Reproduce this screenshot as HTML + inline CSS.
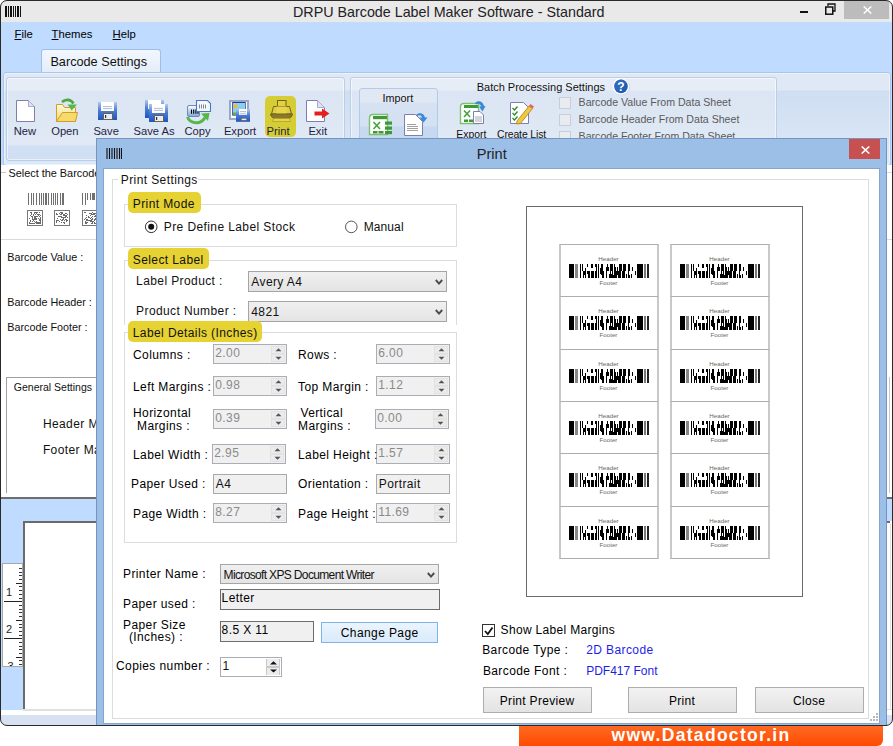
<!DOCTYPE html>
<html><head><meta charset="utf-8"><style>
html,body{margin:0;padding:0;}
body{width:893px;height:746px;position:relative;overflow:hidden;background:#fff;font-family:"Liberation Sans",sans-serif;}
.r{position:absolute;}
.t{position:absolute;white-space:nowrap;}
#main{position:absolute;left:0;top:0;width:893px;height:726px;overflow:hidden;border-radius:7px 7px 7px 7px;}
#frame{position:absolute;left:0;top:0;width:893px;height:726px;border:1px solid #2a2a2a;box-sizing:border-box;border-radius:7px;pointer-events:none;}
</style></head><body>
<div id="main">
<div class="r" style="left:0px;top:0px;width:893px;height:22px;background:#e9e9e9;"></div>
<div class="r" style="left:5px;top:6px;width:2px;height:11px;background:#111;"></div>
<div class="r" style="left:8px;top:6px;width:1px;height:11px;background:#111;"></div>
<div class="r" style="left:10px;top:6px;width:2px;height:11px;background:#111;"></div>
<div class="r" style="left:13px;top:6px;width:1px;height:11px;background:#111;"></div>
<div class="r" style="left:15px;top:6px;width:1px;height:11px;background:#111;"></div>
<div class="r" style="left:17px;top:6px;width:2px;height:11px;background:#111;"></div>
<div class="r" style="left:20px;top:6px;width:1px;height:11px;background:#111;"></div>
<div class="t " style="left:293px;top:5.20px;font-size:14.3px;line-height:14.3px;letter-spacing:0px;color:#222;">DRPU Barcode Label Maker Software - Standard</div>
<div class="r" style="left:800px;top:11px;width:8px;height:2px;background:#111;"></div>
<svg class="r" style="left:825px;top:3px" width="11" height="12"><path d="M3 3V1H10V8H8" fill="none" stroke="#111" stroke-width="1.3"/><rect x="0.75" y="4" width="7" height="7.2" fill="none" stroke="#111" stroke-width="1.5"/></svg>
<div class="r" style="left:844px;top:1px;width:45px;height:18px;background:#bcbcbc;"></div>
<svg class="r" style="left:862.5px;top:5.5px" width="9" height="8"><path d="M0.7 0.5L8.3 7.5M8.3 0.5L0.7 7.5" stroke="#fff" stroke-width="1.5"/></svg>
<div class="r" style="left:0px;top:22px;width:893px;height:143px;background:#bfdbff;"></div>
<div class="t " style="left:14.5px;top:28.73px;font-size:11.3px;line-height:11.3px;letter-spacing:0px;color:#000;"><u>F</u>ile</div>
<div class="t " style="left:51.6px;top:28.73px;font-size:11.3px;line-height:11.3px;letter-spacing:0px;color:#000;"><u>T</u>hemes</div>
<div class="t " style="left:112.6px;top:28.73px;font-size:11.3px;line-height:11.3px;letter-spacing:0px;color:#000;"><u>H</u>elp</div>
<div class="r" style="left:41px;top:49px;width:118px;height:24px;background:linear-gradient(#f2f7fe,#e3ecf9);border:1px solid #9ebfe9;border-bottom:none;border-radius:3px 3px 0 0;"></div>
<div class="t " style="left:50.4px;top:55.75px;font-size:12.7px;line-height:12.7px;letter-spacing:0px;color:#111;">Barcode Settings</div>
<div class="r" style="left:3px;top:72px;width:886px;height:92px;background:linear-gradient(#dfe8f4 0px,#dfe8f4 17px,#cfdef1 18px,#dce9f8 100%);border:1px solid #a9c6ec;border-radius:3px;box-shadow:inset 0 0 0 1px rgba(255,255,255,0.45);"></div>
<div class="r" style="left:6px;top:77px;width:337px;height:82px;background:linear-gradient(#e6edf7 0px,#e6edf7 12px,#dbe5f3 13px,#e0e9f5 67px,#d0dff3 68px,#d0dff3 82px);border:1px solid #b9cfe9;border-radius:3px;box-shadow:inset 0 0 0 1px rgba(255,255,255,0.55);"></div>
<div class="r" style="left:350px;top:77px;width:425px;height:82px;background:linear-gradient(#e6edf7 0px,#e6edf7 12px,#dbe5f3 13px,#e0e9f5 67px,#d0dff3 68px,#d0dff3 82px);border:1px solid #b9cfe9;border-radius:3px;box-shadow:inset 0 0 0 1px rgba(255,255,255,0.55);"></div>
<div class="r" style="left:359px;top:88px;width:77px;height:60px;background:linear-gradient(#e0e8f4 0px,#e0e8f4 13px,#d6e2f2 14px,#d4e1f2 37px,#c6d9f1 38px,#c6d9f1 100%);border:1px solid #b2cbeb;border-radius:3px;"></div>
<svg width="0" height="0" style="position:absolute"><defs><linearGradient id="gFlop" x1="0" y1="0" x2="0" y2="1"><stop offset="0" stop-color="#b4c8ec"/><stop offset="0.45" stop-color="#4f7fd2"/><stop offset="1" stop-color="#1c55c2"/></linearGradient><linearGradient id="gFold" x1="0" y1="0" x2="0" y2="1"><stop offset="0" stop-color="#fffbe0"/><stop offset="1" stop-color="#f3d860"/></linearGradient><linearGradient id="gCard" x1="0" y1="0" x2="0" y2="1"><stop offset="0" stop-color="#ffffff"/><stop offset="1" stop-color="#7ea6dc"/></linearGradient><linearGradient id="gPrn" x1="0" y1="0" x2="0" y2="1"><stop offset="0" stop-color="#e8d84a"/><stop offset="1" stop-color="#c8b838"/></linearGradient></defs></svg>
<svg class="r" style="left:15px;top:99px" width="22" height="24"><path d="M1.5 1.5H13.5L19.5 7.5V22.5H1.5Z" fill="#fff" stroke="#7d7fb0" stroke-width="1"/><path d="M13.5 1.5V7.5H19.5" fill="#dfe2ee" stroke="#a9abcf" stroke-width="1"/></svg>
<svg class="r" style="left:52px;top:96px" width="30" height="28"><path d="M4.5 8.5H10.5L12.5 11.5H23.5V25.5H4.5Z" fill="url(#gFold)" stroke="#d49a30"/><path d="M10.5 16.5H25.5L23.5 25.5H4.5Z" fill="#f5dc6a" stroke="#d49a30"/><path d="M10 6C13 3.2 18.5 2.6 21.5 7.5" fill="none" stroke="#4aaa3c" stroke-width="2.6"/><path d="M15.6 8.6L25 8.6L19.6 14.6Z" fill="#56b848"/></svg>
<svg class="r" style="left:98px;top:102px" width="19" height="18"><rect x="0" y="0" width="19" height="18" fill="url(#gFlop)"/><rect x="3" y="0" width="13" height="9" fill="#fff"/><path d="M5 4.6H14M5 6.6H14" stroke="#a8b4c8" stroke-width="0.9"/><rect x="5.5" y="11.5" width="9" height="6" fill="#e8ecf5" stroke="#6a6050"/><rect x="7" y="13" width="1.2" height="3" fill="#333"/></svg>
<svg class="r" style="left:145px;top:100px" width="24" height="22"><rect x="0" y="0" width="19" height="18" fill="url(#gFlop)"/><rect x="3" y="0" width="13" height="9" fill="#fff"/><rect x="4" y="4" width="19" height="18" fill="url(#gFlop)"/><rect x="7" y="4" width="13" height="9" fill="#fff"/><path d="M9 8.4H18M9 10.4H18" stroke="#a8b4c8" stroke-width="0.9"/><rect x="9.5" y="15.5" width="9" height="6" fill="#e8ecf5" stroke="#6a6050"/><rect x="11" y="17" width="1.2" height="3" fill="#333"/></svg>
<svg class="r" style="left:184px;top:97px" width="30" height="28"><rect x="3.5" y="8.5" width="12" height="11" rx="1.5" fill="url(#gCard)" stroke="#6a8ac0"/><path d="M7.5 12.5V16.8M9.7 12.5V16.8M11.9 12.5V16.8M14 12.5V16.8" stroke="#000" stroke-width="1.1"/><path d="M12.5 3.5H23.5L26.5 6.5V14.5H12.5Z" fill="#f4f8fe" stroke="#4a78c8" stroke-width="1.1"/><path d="M15.5 7.5V11.5M17.5 7.5V11.5M19.5 7.5V11.5M21.5 7.5V11.5" stroke="#777" stroke-width="0.9"/><path d="M3.5 20C6 27 17 28 21 20.5" fill="none" stroke="#56b848" stroke-width="3"/><path d="M17 16.5L25.5 16L24 24Z" fill="#56b848"/></svg>
<svg class="r" style="left:228px;top:99px" width="24" height="24"><rect x="1" y="1" width="20" height="20" fill="#9aa6cc"/><rect x="3" y="3" width="16" height="16" fill="#fff"/><rect x="4.2" y="3" width="13.5" height="13.6" fill="#2e3a7a"/><rect x="5" y="4" width="12" height="12" fill="#88d0f4"/><circle cx="7.5" cy="7.6" r="2" fill="#f8b820"/><rect x="5" y="13.5" width="12" height="2.5" fill="#5cb040"/><rect x="8" y="10" width="14" height="12.8" fill="url(#gFlop)"/><rect x="11" y="10" width="8" height="5.8" fill="#fff"/><path d="M12 12.5H18M12 14.3H18" stroke="#a8b4c8" stroke-width="0.8"/><rect x="13.2" y="19.2" width="5.6" height="2.2" fill="#e8ecf5" stroke="#6a6050" stroke-width="0.7"/></svg>
<div class="r" style="left:265px;top:96px;width:31px;height:41px;background:#d6cd34;border-radius:5px;"></div>
<svg class="r" style="left:269px;top:99px" width="24" height="24"><rect x="8.5" y="1.5" width="8.5" height="6" fill="#e6d040" stroke="#6f6520"/><path d="M4.5 7.5H20.5L22.5 15H2.5Z" fill="#e0cc40" stroke="#6f6520"/><rect x="7.5" y="7.5" width="10" height="7.5" fill="#e8d448"/><path d="M1.5 15H23.5C23 18 21 19.5 19 19.5H6C4 19.5 2 18 1.5 15Z" fill="#8a7a28" stroke="#6f6520"/><path d="M4.5 19.5H20.5L21.5 22.5H3.5Z" fill="#e8d448" stroke="#b0a030" stroke-width="0.8"/></svg>
<svg class="r" style="left:305px;top:99px" width="26" height="24"><path d="M1.5 1.5H12.5L19.5 8.5V22.5H1.5Z" fill="#fff" stroke="#7d7fb0"/><path d="M12.5 1.5V8.5H19.5" fill="#dfe2ee" stroke="#a9abcf"/><path d="M9.5 12.5H17V9.5L24.5 14.5L17 19.5V16.5H9.5Z" fill="#e32020"/></svg>
<div class="t " style="left:13.7px;top:126.32px;font-size:11.2px;line-height:11.2px;letter-spacing:0px;color:#1f1f3f;">New</div>
<div class="t " style="left:51.2px;top:126.32px;font-size:11.2px;line-height:11.2px;letter-spacing:0px;color:#1f1f3f;">Open</div>
<div class="t " style="left:93.4px;top:126.32px;font-size:11.2px;line-height:11.2px;letter-spacing:0px;color:#1f1f3f;">Save</div>
<div class="t " style="left:133.5px;top:126.32px;font-size:11.2px;line-height:11.2px;letter-spacing:0px;color:#1f1f3f;">Save As</div>
<div class="t " style="left:184.5px;top:126.32px;font-size:11.2px;line-height:11.2px;letter-spacing:0px;color:#1f1f3f;">Copy</div>
<div class="t " style="left:223.89999999999998px;top:126.32px;font-size:11.2px;line-height:11.2px;letter-spacing:0px;color:#1f1f3f;">Export</div>
<div class="t " style="left:266.5px;top:126.32px;font-size:11.2px;line-height:11.2px;letter-spacing:0px;color:#1f1f3f;">Print</div>
<div class="t " style="left:308.4px;top:126.32px;font-size:11.2px;line-height:11.2px;letter-spacing:0px;color:#1f1f3f;">Exit</div>
<div class="t " style="left:382.6px;top:92.96px;font-size:10.8px;line-height:10.8px;letter-spacing:0px;color:#111;">Import</div>
<svg class="r" style="left:368px;top:113px" width="25" height="23"><path d="M1.5 5C1.5 2.5 3 1.5 5 1.5H19.5V21.5H1.5Z" fill="#fff" stroke="#7cc070" stroke-width="1.4"/><rect x="5" y="3" width="14" height="3.2" fill="#3d9a35"/><path d="M5.5 9L12 16M12 9L5.5 16" stroke="#4aa040" stroke-width="1.6"/><rect x="17" y="8.5" width="7" height="3.2" fill="#3d9a35"/><rect x="17" y="13.5" width="7" height="3.2" fill="#3d9a35"/><rect x="17" y="18" width="7" height="3.2" fill="#3d9a35"/><rect x="5" y="18" width="4.5" height="2.5" fill="#3d9a35"/><rect x="10.5" y="18" width="5" height="2.5" fill="#3d9a35"/></svg>
<svg class="r" style="left:404px;top:111px" width="24" height="26"><path d="M0.5 3.5H11.5L18.5 10.5V24.5H0.5Z" fill="#fff" stroke="#7d7fb0"/><path d="M3 13.5H12M3 15.5H14M3 17.5H14M3 19.5H14" stroke="#888" stroke-width="0.8"/><path d="M12 4C15 1 20 2 21 6.5L23.5 6.5L19.5 11.5L15.5 6.5L18 6.5C17.5 4 15 3.5 13 5Z" fill="#3a88d8"/></svg>
<div class="t " style="left:476.7px;top:81.59px;font-size:11px;line-height:11px;letter-spacing:0px;color:#111;">Batch Processing Settings</div>
<svg class="r" style="left:612px;top:77px" width="19" height="19"><circle cx="9.6" cy="9.9" r="8.4" fill="#c8d0dc"/><circle cx="9" cy="9.4" r="8.3" fill="#fff"/><circle cx="9" cy="9.4" r="6.8" fill="#1f5fb5"/><path d="M2.5 9.4A6.5 6.5 0 0 1 14 5L5 14A6.5 6.5 0 0 1 2.5 9.4Z" fill="#3a70c0" opacity="0.6"/><text x="9" y="13.8" text-anchor="middle" font-family="Liberation Sans" font-weight="bold" font-size="12" fill="#fff">?</text></svg>
<svg class="r" style="left:459px;top:100px" width="27" height="25"><path d="M1.5 7C1.5 4.5 3 3.5 5 3.5H19.5V23.5H1.5Z" fill="#fff" stroke="#7cc070" stroke-width="1.4"/><rect x="5" y="5" width="14" height="3" fill="#3d9a35"/><path d="M5 10.5L11 17M11 10.5L5 17" stroke="#4aa040" stroke-width="1.6"/><rect x="5" y="19.5" width="4" height="2.5" fill="#3d9a35"/><rect x="10" y="19.5" width="4" height="2.5" fill="#3d9a35"/><path d="M14.5 11.5H21L24.5 15V23.5H14.5Z" fill="#fff" stroke="#7d7fb0"/><path d="M16 17H23M16 19H23M16 21H23" stroke="#888" stroke-width="0.7"/><path d="M16 3C19 0 24 1 25 6L26.5 6L23.5 11.5L20 6.5L22 6.5C21.5 4 19 3 17 4.5Z" fill="#3a88d8"/></svg>
<svg class="r" style="left:509px;top:101px" width="26" height="24"><path d="M1.5 1.5H14.5L19.5 6.5V22.5H1.5Z" fill="#fff" stroke="#7d7fb0"/><path d="M3.5 7L5.5 9L8.5 5.5M3.5 12L5.5 14L8.5 10.5M3.5 17L5.5 19L8.5 15.5" stroke="#2d8a2a" stroke-width="1.3" fill="none"/><path d="M8 20L20 5L23.5 7.5L11.5 22.5L7.5 23Z" fill="#f0c840" stroke="#a88020" stroke-width="0.8"/><path d="M20 5L23.5 7.5L25 5.5L21.5 3Z" fill="#e86060"/></svg>
<div class="t " style="left:456.3px;top:129.70px;font-size:10.4px;line-height:10.4px;letter-spacing:0px;color:#111;">Export</div>
<div class="t " style="left:497px;top:129.70px;font-size:10.4px;line-height:10.4px;letter-spacing:-0.1px;color:#111;">Create List</div>
<div class="r" style="left:559px;top:96.5px;width:12px;height:12px;background:#e8ecf0;border:1px solid #c9ced6;box-sizing:border-box;"></div>
<div class="t " style="left:578.6px;top:97.33px;font-size:10.6px;line-height:10.6px;letter-spacing:0px;color:#5a5a5a;">Barcode Value From Data Sheet</div>
<div class="r" style="left:559px;top:113.5px;width:12px;height:12px;background:#e8ecf0;border:1px solid #c9ced6;box-sizing:border-box;"></div>
<div class="t " style="left:578.6px;top:114.33px;font-size:10.6px;line-height:10.6px;letter-spacing:0px;color:#5a5a5a;">Barcode Header From Data Sheet</div>
<div class="r" style="left:559px;top:130.5px;width:12px;height:12px;background:#e8ecf0;border:1px solid #c9ced6;box-sizing:border-box;"></div>
<div class="t " style="left:578.6px;top:131.33px;font-size:10.6px;line-height:10.6px;letter-spacing:0px;color:#5a5a5a;">Barcode Footer From Data Sheet</div>
<div class="r" style="left:1px;top:165px;width:892px;height:333px;background:#fff;"></div>
<div class="r" style="left:1px;top:172px;width:5px;height:1px;background:#c8c8c8;"></div>
<div class="t " style="left:8.4px;top:167.57px;font-size:10.9px;line-height:10.9px;letter-spacing:0px;color:#111;">Select the Barcode</div>
<div class="r" style="left:28.0px;top:193px;width:1.3px;height:12px;background:#707070;"></div>
<div class="r" style="left:30.8px;top:193px;width:1px;height:12px;background:#707070;"></div>
<div class="r" style="left:33.0px;top:193px;width:1.1px;height:12px;background:#707070;"></div>
<div class="r" style="left:35.8px;top:193px;width:1.1px;height:12px;background:#707070;"></div>
<div class="r" style="left:38.6px;top:193px;width:1px;height:12px;background:#707070;"></div>
<div class="r" style="left:40.5px;top:193px;width:1.1px;height:12px;background:#707070;"></div>
<div class="r" style="left:43.1px;top:193px;width:1px;height:12px;background:#707070;"></div>
<div class="r" style="left:45.4px;top:193px;width:1.5px;height:12px;background:#707070;"></div>
<div class="r" style="left:48.2px;top:193px;width:1.1px;height:12px;background:#707070;"></div>
<div class="r" style="left:51.0px;top:193px;width:1px;height:12px;background:#707070;"></div>
<div class="r" style="left:52.6px;top:193px;width:1.1px;height:12px;background:#707070;"></div>
<div class="r" style="left:55.2px;top:193px;width:1px;height:12px;background:#707070;"></div>
<div class="r" style="left:57.1px;top:193px;width:1.1px;height:12px;background:#707070;"></div>
<div class="r" style="left:59.9px;top:193px;width:1.1px;height:12px;background:#707070;"></div>
<div class="r" style="left:62.2px;top:193px;width:1.9px;height:12px;background:#707070;"></div>
<div class="r" style="left:82px;top:193px;width:1.2px;height:12px;background:#707070;"></div>
<div class="r" style="left:85px;top:193px;width:0.9px;height:12px;background:#707070;"></div>
<div class="r" style="left:86.8px;top:193px;width:1.2px;height:7px;background:#707070;"></div>
<div class="r" style="left:89.6px;top:193px;width:1.6px;height:7px;background:#707070;"></div>
<div class="r" style="left:92.4px;top:193px;width:2.4px;height:7px;background:#707070;"></div>
<div class="r" style="left:27px;top:210px;width:16px;height:16px;border:1px solid #777;box-sizing:border-box;background:#fff;"></div>
<svg class="r" style="left:29px;top:212px" width="12" height="12"><rect x="0" y="6" width="1" height="1" fill="#6a6a6a"/><rect x="0" y="10" width="1" height="1" fill="#6a6a6a"/><rect x="0" y="11" width="1" height="1" fill="#6a6a6a"/><rect x="1" y="0" width="1" height="1" fill="#6a6a6a"/><rect x="1" y="3" width="1" height="1" fill="#6a6a6a"/><rect x="1" y="8" width="1" height="1" fill="#6a6a6a"/><rect x="1" y="9" width="1" height="1" fill="#6a6a6a"/><rect x="1" y="11" width="1" height="1" fill="#6a6a6a"/><rect x="2" y="0" width="1" height="1" fill="#6a6a6a"/><rect x="2" y="1" width="1" height="1" fill="#6a6a6a"/><rect x="2" y="2" width="1" height="1" fill="#6a6a6a"/><rect x="2" y="4" width="1" height="1" fill="#6a6a6a"/><rect x="2" y="11" width="1" height="1" fill="#6a6a6a"/><rect x="3" y="4" width="1" height="1" fill="#6a6a6a"/><rect x="3" y="5" width="1" height="1" fill="#6a6a6a"/><rect x="3" y="6" width="1" height="1" fill="#6a6a6a"/><rect x="3" y="7" width="1" height="1" fill="#6a6a6a"/><rect x="3" y="9" width="1" height="1" fill="#6a6a6a"/><rect x="3" y="11" width="1" height="1" fill="#6a6a6a"/><rect x="4" y="2" width="1" height="1" fill="#6a6a6a"/><rect x="4" y="3" width="1" height="1" fill="#6a6a6a"/><rect x="4" y="7" width="1" height="1" fill="#6a6a6a"/><rect x="4" y="8" width="1" height="1" fill="#6a6a6a"/><rect x="4" y="11" width="1" height="1" fill="#6a6a6a"/><rect x="5" y="0" width="1" height="1" fill="#6a6a6a"/><rect x="5" y="1" width="1" height="1" fill="#6a6a6a"/><rect x="5" y="4" width="1" height="1" fill="#6a6a6a"/><rect x="5" y="5" width="1" height="1" fill="#6a6a6a"/><rect x="5" y="6" width="1" height="1" fill="#6a6a6a"/><rect x="5" y="7" width="1" height="1" fill="#6a6a6a"/><rect x="5" y="9" width="1" height="1" fill="#6a6a6a"/><rect x="5" y="11" width="1" height="1" fill="#6a6a6a"/><rect x="6" y="0" width="1" height="1" fill="#6a6a6a"/><rect x="6" y="2" width="1" height="1" fill="#6a6a6a"/><rect x="6" y="4" width="1" height="1" fill="#6a6a6a"/><rect x="6" y="5" width="1" height="1" fill="#6a6a6a"/><rect x="6" y="6" width="1" height="1" fill="#6a6a6a"/><rect x="6" y="7" width="1" height="1" fill="#6a6a6a"/><rect x="6" y="10" width="1" height="1" fill="#6a6a6a"/><rect x="7" y="0" width="1" height="1" fill="#6a6a6a"/><rect x="7" y="1" width="1" height="1" fill="#6a6a6a"/><rect x="7" y="4" width="1" height="1" fill="#6a6a6a"/><rect x="7" y="6" width="1" height="1" fill="#6a6a6a"/><rect x="7" y="7" width="1" height="1" fill="#6a6a6a"/><rect x="7" y="9" width="1" height="1" fill="#6a6a6a"/><rect x="7" y="10" width="1" height="1" fill="#6a6a6a"/><rect x="7" y="11" width="1" height="1" fill="#6a6a6a"/><rect x="8" y="0" width="1" height="1" fill="#6a6a6a"/><rect x="8" y="2" width="1" height="1" fill="#6a6a6a"/><rect x="8" y="4" width="1" height="1" fill="#6a6a6a"/><rect x="8" y="10" width="1" height="1" fill="#6a6a6a"/><rect x="8" y="11" width="1" height="1" fill="#6a6a6a"/><rect x="9" y="2" width="1" height="1" fill="#6a6a6a"/><rect x="9" y="3" width="1" height="1" fill="#6a6a6a"/><rect x="9" y="6" width="1" height="1" fill="#6a6a6a"/><rect x="9" y="10" width="1" height="1" fill="#6a6a6a"/><rect x="9" y="11" width="1" height="1" fill="#6a6a6a"/><rect x="10" y="0" width="1" height="1" fill="#6a6a6a"/><rect x="10" y="2" width="1" height="1" fill="#6a6a6a"/><rect x="10" y="4" width="1" height="1" fill="#6a6a6a"/><rect x="10" y="7" width="1" height="1" fill="#6a6a6a"/><rect x="10" y="8" width="1" height="1" fill="#6a6a6a"/><rect x="10" y="10" width="1" height="1" fill="#6a6a6a"/><rect x="10" y="11" width="1" height="1" fill="#6a6a6a"/><rect x="11" y="3" width="1" height="1" fill="#6a6a6a"/><rect x="11" y="5" width="1" height="1" fill="#6a6a6a"/><rect x="11" y="6" width="1" height="1" fill="#6a6a6a"/><rect x="11" y="7" width="1" height="1" fill="#6a6a6a"/><rect x="11" y="8" width="1" height="1" fill="#6a6a6a"/><rect x="11" y="9" width="1" height="1" fill="#6a6a6a"/><rect x="11" y="10" width="1" height="1" fill="#6a6a6a"/><rect x="11" y="11" width="1" height="1" fill="#6a6a6a"/></svg>
<div class="r" style="left:54px;top:210px;width:16px;height:16px;border:1px solid #777;box-sizing:border-box;background:#fff;"></div>
<svg class="r" style="left:56px;top:212px" width="12" height="12"><rect x="0" y="1" width="1" height="1" fill="#6a6a6a"/><rect x="0" y="2" width="1" height="1" fill="#6a6a6a"/><rect x="0" y="8" width="1" height="1" fill="#6a6a6a"/><rect x="0" y="9" width="1" height="1" fill="#6a6a6a"/><rect x="0" y="10" width="1" height="1" fill="#6a6a6a"/><rect x="1" y="2" width="1" height="1" fill="#6a6a6a"/><rect x="1" y="6" width="1" height="1" fill="#6a6a6a"/><rect x="1" y="8" width="1" height="1" fill="#6a6a6a"/><rect x="2" y="4" width="1" height="1" fill="#6a6a6a"/><rect x="2" y="8" width="1" height="1" fill="#6a6a6a"/><rect x="3" y="1" width="1" height="1" fill="#6a6a6a"/><rect x="3" y="4" width="1" height="1" fill="#6a6a6a"/><rect x="3" y="9" width="1" height="1" fill="#6a6a6a"/><rect x="4" y="0" width="1" height="1" fill="#6a6a6a"/><rect x="4" y="2" width="1" height="1" fill="#6a6a6a"/><rect x="4" y="4" width="1" height="1" fill="#6a6a6a"/><rect x="4" y="7" width="1" height="1" fill="#6a6a6a"/><rect x="5" y="0" width="1" height="1" fill="#6a6a6a"/><rect x="5" y="1" width="1" height="1" fill="#6a6a6a"/><rect x="5" y="2" width="1" height="1" fill="#6a6a6a"/><rect x="5" y="4" width="1" height="1" fill="#6a6a6a"/><rect x="5" y="5" width="1" height="1" fill="#6a6a6a"/><rect x="5" y="8" width="1" height="1" fill="#6a6a6a"/><rect x="5" y="10" width="1" height="1" fill="#6a6a6a"/><rect x="6" y="0" width="1" height="1" fill="#6a6a6a"/><rect x="6" y="1" width="1" height="1" fill="#6a6a6a"/><rect x="6" y="5" width="1" height="1" fill="#6a6a6a"/><rect x="6" y="7" width="1" height="1" fill="#6a6a6a"/><rect x="6" y="8" width="1" height="1" fill="#6a6a6a"/><rect x="7" y="2" width="1" height="1" fill="#6a6a6a"/><rect x="7" y="3" width="1" height="1" fill="#6a6a6a"/><rect x="7" y="5" width="1" height="1" fill="#6a6a6a"/><rect x="7" y="6" width="1" height="1" fill="#6a6a6a"/><rect x="7" y="7" width="1" height="1" fill="#6a6a6a"/><rect x="7" y="10" width="1" height="1" fill="#6a6a6a"/><rect x="8" y="2" width="1" height="1" fill="#6a6a6a"/><rect x="8" y="3" width="1" height="1" fill="#6a6a6a"/><rect x="8" y="5" width="1" height="1" fill="#6a6a6a"/><rect x="8" y="8" width="1" height="1" fill="#6a6a6a"/><rect x="8" y="10" width="1" height="1" fill="#6a6a6a"/><rect x="8" y="11" width="1" height="1" fill="#6a6a6a"/><rect x="9" y="1" width="1" height="1" fill="#6a6a6a"/><rect x="9" y="3" width="1" height="1" fill="#6a6a6a"/><rect x="9" y="4" width="1" height="1" fill="#6a6a6a"/><rect x="9" y="5" width="1" height="1" fill="#6a6a6a"/><rect x="9" y="7" width="1" height="1" fill="#6a6a6a"/><rect x="10" y="1" width="1" height="1" fill="#6a6a6a"/><rect x="10" y="3" width="1" height="1" fill="#6a6a6a"/><rect x="10" y="4" width="1" height="1" fill="#6a6a6a"/><rect x="10" y="7" width="1" height="1" fill="#6a6a6a"/><rect x="10" y="8" width="1" height="1" fill="#6a6a6a"/><rect x="10" y="9" width="1" height="1" fill="#6a6a6a"/><rect x="11" y="2" width="1" height="1" fill="#6a6a6a"/><rect x="11" y="5" width="1" height="1" fill="#6a6a6a"/><rect x="11" y="8" width="1" height="1" fill="#6a6a6a"/></svg>
<div class="r" style="left:82px;top:210px;width:16px;height:16px;border:1px solid #777;box-sizing:border-box;background:#fff;"></div>
<svg class="r" style="left:84px;top:212px" width="12" height="12"><rect x="0" y="0" width="1" height="1" fill="#6a6a6a"/><rect x="0" y="7" width="1" height="1" fill="#6a6a6a"/><rect x="1" y="0" width="1" height="1" fill="#6a6a6a"/><rect x="1" y="6" width="1" height="1" fill="#6a6a6a"/><rect x="1" y="9" width="1" height="1" fill="#6a6a6a"/><rect x="1" y="10" width="1" height="1" fill="#6a6a6a"/><rect x="1" y="11" width="1" height="1" fill="#6a6a6a"/><rect x="2" y="3" width="1" height="1" fill="#6a6a6a"/><rect x="2" y="5" width="1" height="1" fill="#6a6a6a"/><rect x="2" y="7" width="1" height="1" fill="#6a6a6a"/><rect x="2" y="8" width="1" height="1" fill="#6a6a6a"/><rect x="2" y="10" width="1" height="1" fill="#6a6a6a"/><rect x="2" y="11" width="1" height="1" fill="#6a6a6a"/><rect x="3" y="7" width="1" height="1" fill="#6a6a6a"/><rect x="3" y="8" width="1" height="1" fill="#6a6a6a"/><rect x="3" y="10" width="1" height="1" fill="#6a6a6a"/><rect x="4" y="4" width="1" height="1" fill="#6a6a6a"/><rect x="4" y="5" width="1" height="1" fill="#6a6a6a"/><rect x="4" y="8" width="1" height="1" fill="#6a6a6a"/><rect x="5" y="1" width="1" height="1" fill="#6a6a6a"/><rect x="5" y="5" width="1" height="1" fill="#6a6a6a"/><rect x="5" y="8" width="1" height="1" fill="#6a6a6a"/><rect x="6" y="1" width="1" height="1" fill="#6a6a6a"/><rect x="6" y="3" width="1" height="1" fill="#6a6a6a"/><rect x="6" y="6" width="1" height="1" fill="#6a6a6a"/><rect x="6" y="8" width="1" height="1" fill="#6a6a6a"/><rect x="6" y="9" width="1" height="1" fill="#6a6a6a"/><rect x="7" y="1" width="1" height="1" fill="#6a6a6a"/><rect x="7" y="2" width="1" height="1" fill="#6a6a6a"/><rect x="7" y="5" width="1" height="1" fill="#6a6a6a"/><rect x="7" y="7" width="1" height="1" fill="#6a6a6a"/><rect x="7" y="8" width="1" height="1" fill="#6a6a6a"/><rect x="7" y="9" width="1" height="1" fill="#6a6a6a"/><rect x="7" y="11" width="1" height="1" fill="#6a6a6a"/><rect x="8" y="0" width="1" height="1" fill="#6a6a6a"/><rect x="8" y="2" width="1" height="1" fill="#6a6a6a"/><rect x="8" y="4" width="1" height="1" fill="#6a6a6a"/><rect x="8" y="6" width="1" height="1" fill="#6a6a6a"/><rect x="8" y="7" width="1" height="1" fill="#6a6a6a"/><rect x="8" y="9" width="1" height="1" fill="#6a6a6a"/><rect x="8" y="10" width="1" height="1" fill="#6a6a6a"/><rect x="8" y="11" width="1" height="1" fill="#6a6a6a"/><rect x="9" y="1" width="1" height="1" fill="#6a6a6a"/><rect x="9" y="2" width="1" height="1" fill="#6a6a6a"/><rect x="9" y="9" width="1" height="1" fill="#6a6a6a"/><rect x="10" y="1" width="1" height="1" fill="#6a6a6a"/><rect x="10" y="2" width="1" height="1" fill="#6a6a6a"/><rect x="10" y="4" width="1" height="1" fill="#6a6a6a"/><rect x="10" y="7" width="1" height="1" fill="#6a6a6a"/><rect x="10" y="8" width="1" height="1" fill="#6a6a6a"/><rect x="10" y="10" width="1" height="1" fill="#6a6a6a"/><rect x="10" y="11" width="1" height="1" fill="#6a6a6a"/><rect x="11" y="1" width="1" height="1" fill="#6a6a6a"/><rect x="11" y="3" width="1" height="1" fill="#6a6a6a"/><rect x="11" y="4" width="1" height="1" fill="#6a6a6a"/><rect x="11" y="6" width="1" height="1" fill="#6a6a6a"/><rect x="11" y="7" width="1" height="1" fill="#6a6a6a"/><rect x="11" y="11" width="1" height="1" fill="#6a6a6a"/></svg>
<div class="r" style="left:1px;top:239px;width:95px;height:1px;background:#dadada;"></div>
<div class="r" style="left:886px;top:172px;width:6px;height:1px;background:#dadada;"></div>
<div class="t " style="left:7.2px;top:251.86px;font-size:10.8px;line-height:10.8px;letter-spacing:0px;color:#111;">Barcode Value :</div>
<div class="t " style="left:7.2px;top:296.96px;font-size:10.8px;line-height:10.8px;letter-spacing:0px;color:#111;">Barcode Header :</div>
<div class="t " style="left:7.2px;top:321.86px;font-size:10.8px;line-height:10.8px;letter-spacing:0px;color:#111;">Barcode Footer :</div>
<div class="r" style="left:6px;top:377px;width:92px;height:116px;border:1px solid #a0a0a0;border-right:none;border-bottom:none;box-sizing:border-box;"></div>
<div class="t " style="left:13.8px;top:382.41px;font-size:10.5px;line-height:10.5px;letter-spacing:0px;color:#111;">General Settings</div>
<div class="t " style="left:42.9px;top:417.94px;font-size:12px;line-height:12px;letter-spacing:0.4px;color:#111;">Header M</div>
<div class="t " style="left:42.9px;top:444.14px;font-size:12px;line-height:12px;letter-spacing:0.4px;color:#111;">Footer Ma</div>
<div class="r" style="left:1px;top:497px;width:95px;height:2px;background:#6e6e6e;"></div>
<div class="r" style="left:1px;top:499px;width:95px;height:211px;background:#bfdbff;"></div>
<div class="r" style="left:23px;top:521px;width:73px;height:189px;background:#fff;border-left:2px solid #6a6a6a;border-top:2px solid #6a6a6a;box-sizing:border-box;"></div>
<div class="r" style="left:23px;top:709px;width:73px;height:2px;background:#e0e0e0;"></div>
<div class="r" style="left:2px;top:563px;width:21px;height:104px;background:#fff;border:1px solid #a8a8a8;box-sizing:border-box;"></div>
<div class="r" style="left:19px;top:568px;width:3px;height:1px;background:#333;"></div>
<div class="r" style="left:19px;top:572px;width:3px;height:1px;background:#333;"></div>
<div class="r" style="left:19px;top:575px;width:3px;height:1px;background:#333;"></div>
<div class="r" style="left:19px;top:579px;width:3px;height:1px;background:#333;"></div>
<div class="r" style="left:16px;top:583px;width:6px;height:1px;background:#222;"></div>
<div class="r" style="left:19px;top:586px;width:3px;height:1px;background:#333;"></div>
<div class="r" style="left:19px;top:590px;width:3px;height:1px;background:#333;"></div>
<div class="r" style="left:19px;top:594px;width:3px;height:1px;background:#333;"></div>
<div class="r" style="left:19px;top:598px;width:3px;height:1px;background:#333;"></div>
<div class="r" style="left:4px;top:601px;width:18px;height:1px;background:#222;"></div>
<div class="r" style="left:19px;top:605px;width:3px;height:1px;background:#333;"></div>
<div class="r" style="left:19px;top:609px;width:3px;height:1px;background:#333;"></div>
<div class="r" style="left:19px;top:612px;width:3px;height:1px;background:#333;"></div>
<div class="r" style="left:19px;top:616px;width:3px;height:1px;background:#333;"></div>
<div class="r" style="left:16px;top:620px;width:6px;height:1px;background:#222;"></div>
<div class="r" style="left:19px;top:624px;width:3px;height:1px;background:#333;"></div>
<div class="r" style="left:19px;top:627px;width:3px;height:1px;background:#333;"></div>
<div class="r" style="left:19px;top:631px;width:3px;height:1px;background:#333;"></div>
<div class="r" style="left:19px;top:635px;width:3px;height:1px;background:#333;"></div>
<div class="r" style="left:4px;top:638px;width:18px;height:1px;background:#222;"></div>
<div class="r" style="left:19px;top:642px;width:3px;height:1px;background:#333;"></div>
<div class="r" style="left:19px;top:646px;width:3px;height:1px;background:#333;"></div>
<div class="r" style="left:19px;top:649px;width:3px;height:1px;background:#333;"></div>
<div class="r" style="left:19px;top:653px;width:3px;height:1px;background:#333;"></div>
<div class="r" style="left:16px;top:657px;width:6px;height:1px;background:#222;"></div>
<div class="r" style="left:19px;top:660px;width:3px;height:1px;background:#333;"></div>
<div class="r" style="left:19px;top:664px;width:3px;height:1px;background:#333;"></div>
<div class="t " style="left:6px;top:587.19px;font-size:11px;line-height:11px;letter-spacing:0px;color:#222;">1</div>
<div class="t " style="left:6px;top:624.19px;font-size:11px;line-height:11px;letter-spacing:0px;color:#222;">2</div>
<div class="r" style="left:7px;top:660px;width:12px;height:6px;overflow:hidden"><div class="t" style="left:0.5px;top:1px;font-size:11px;line-height:11px;color:#222">3</div></div>
<div class="r" style="left:1px;top:711px;width:95px;height:4px;background:#fff;"></div>
<div class="r" style="left:1px;top:715px;width:95px;height:10px;background:#d6e2f2;"></div>
<div class="r" style="left:887px;top:239px;width:5px;height:1px;background:#dadada;"></div>
<div class="r" style="left:889px;top:377px;width:1px;height:116px;background:#c8c8c8;"></div>
<div class="r" style="left:887px;top:497px;width:5px;height:2px;background:#6e6e6e;"></div>
<div class="r" style="left:887px;top:499px;width:5px;height:22px;background:#bfdbff;"></div>
<div class="r" style="left:887px;top:521px;width:3px;height:2px;background:#6a6a6a;"></div>
<div class="r" style="left:890px;top:523px;width:1px;height:186px;background:#e4e4e4;"></div>
<div class="r" style="left:887px;top:709px;width:5px;height:1px;background:#e0e0e0;"></div>
<div class="r" style="left:887px;top:715px;width:5px;height:10px;background:#d6e2f2;"></div>
</div>
<div class="r" style="left:96px;top:138px;width:791px;height:588px;background:#9bbfe7;border:1px solid #7595bf;box-sizing:border-box;"></div>
<svg class="r" style="left:106px;top:148px" width="16" height="11"><path d="M1 0V11M3.5 0V11M6 0V11M8.5 0V11M11 0V11M13.5 0V11M15.5 0V11" stroke="#111" stroke-width="1.1"/></svg>
<div class="t " style="left:476.7px;top:147.04px;font-size:14.6px;line-height:14.6px;letter-spacing:0px;color:#222;">Print</div>
<div class="r" style="left:849px;top:139px;width:31px;height:20px;background:#c75050;"></div>
<svg class="r" style="left:860.5px;top:145.5px" width="9" height="8"><path d="M0.7 0.5L8.3 7.5M8.3 0.5L0.7 7.5" stroke="#fff" stroke-width="1.6"/></svg>
<div class="r" style="left:103px;top:168px;width:777px;height:556px;background:#86a5cd;"></div>
<div class="r" style="left:104px;top:169px;width:775px;height:554px;background:#fff;"></div>
<div class="r" style="left:112px;top:179px;width:757px;height:540px;border:1px solid #dcdcdc;box-sizing:border-box;"></div>
<div class="r" style="left:118px;top:174px;width:80px;height:10px;background:#fff;"></div>
<div class="t " style="left:120.8px;top:173.54px;font-size:12px;line-height:12px;letter-spacing:0.4px;color:#111;">Print Settings</div>
<div class="r" style="left:124px;top:204px;width:333px;height:43px;border:1px solid #dcdcdc;box-sizing:border-box;"></div>
<div class="r" style="left:128px;top:192px;width:73px;height:21px;background:#e6d232;border-radius:5px;"></div>
<div class="t " style="left:132.8px;top:198.24px;font-size:12px;line-height:12px;letter-spacing:0.4px;color:#111;">Print Mode</div>
<svg class="r" style="left:144px;top:220px" width="15" height="14"><circle cx="7.2" cy="6.8" r="5.8" fill="#fff" stroke="#333" stroke-width="1"/><circle cx="7.2" cy="6.8" r="3" fill="#111"/></svg>
<div class="t " style="left:163.8px;top:221.24px;font-size:12px;line-height:12px;letter-spacing:0.4px;color:#111;">Pre Define Label Stock</div>
<svg class="r" style="left:344px;top:220px" width="15" height="14"><circle cx="7.3" cy="6.9" r="5.8" fill="#fff" stroke="#555" stroke-width="1"/></svg>
<div class="t " style="left:363.7px;top:221.24px;font-size:12px;line-height:12px;letter-spacing:0.1px;color:#111;">Manual</div>
<div class="r" style="left:124px;top:260px;width:333px;height:65px;border:1px solid #dcdcdc;border-bottom:none;box-sizing:border-box;"></div>
<div class="r" style="left:128px;top:248px;width:81px;height:21px;background:#e6d232;border-radius:5px;"></div>
<div class="t " style="left:132.8px;top:254.34px;font-size:12px;line-height:12px;letter-spacing:0.4px;color:#111;">Select Label</div>
<div class="t " style="left:136.10000000000002px;top:275.24px;font-size:12px;line-height:12px;letter-spacing:0.4px;color:#111;">Label Product :</div>
<div class="t " style="left:136.10000000000002px;top:305.24px;font-size:12px;line-height:12px;letter-spacing:0.4px;color:#111;">Product Number :</div>
<div class="r" style="left:248px;top:271px;width:199px;height:21px;background:linear-gradient(#f0f0f0,#e4e4e4);border:1px solid #a5a5a5;box-sizing:border-box;"></div>
<svg class="r" style="left:434.5px;top:279px" width="9" height="7"><path d="M0.8 1L4 4.6L7.2 1" fill="none" stroke="#4a4a4a" stroke-width="1.9"/></svg>
<div class="t " style="left:251.3px;top:276.34px;font-size:12px;line-height:12px;letter-spacing:0.4px;color:#111;">Avery A4</div>
<div class="r" style="left:248px;top:301px;width:199px;height:21px;background:linear-gradient(#f0f0f0,#e4e4e4);border:1px solid #a5a5a5;box-sizing:border-box;"></div>
<svg class="r" style="left:434.5px;top:309px" width="9" height="7"><path d="M0.8 1L4 4.6L7.2 1" fill="none" stroke="#4a4a4a" stroke-width="1.9"/></svg>
<div class="t " style="left:251.3px;top:306.14px;font-size:12px;line-height:12px;letter-spacing:0.4px;color:#111;">4821</div>
<div class="r" style="left:124px;top:332px;width:333px;height:211px;border:1px solid #dcdcdc;box-sizing:border-box;"></div>
<div class="r" style="left:128px;top:321px;width:134px;height:21px;background:#e6d232;border-radius:5px;"></div>
<div class="t " style="left:132.8px;top:326.84px;font-size:12px;line-height:12px;letter-spacing:0.4px;color:#111;">Label Details (Inches)</div>
<div class="r" style="left:213px;top:344px;width:74px;height:20px;background:#f0f0f0;border:1px solid #aaadb5;box-sizing:border-box;"></div>
<div class="r" style="left:271px;top:346px;width:14px;height:8px;background:#ebebeb;border:1px solid #e2e2e2;box-sizing:border-box;"></div>
<div class="r" style="left:271px;top:354px;width:14px;height:8px;background:#ebebeb;border:1px solid #e2e2e2;box-sizing:border-box;"></div>
<svg class="r" style="left:275px;top:348px" width="7" height="12"><path d="M0.5 3.2L3.5 0.2L6.5 3.2Z M0.5 8.8L3.5 11.8L6.5 8.8Z" fill="#555"/></svg>
<div class="t " style="left:215.3px;top:347.14px;font-size:12px;line-height:12px;letter-spacing:0.4px;color:#8a8a8a;">2.00</div>
<div class="r" style="left:376px;top:344px;width:74px;height:20px;background:#f0f0f0;border:1px solid #aaadb5;box-sizing:border-box;"></div>
<div class="r" style="left:434px;top:346px;width:14px;height:8px;background:#ebebeb;border:1px solid #e2e2e2;box-sizing:border-box;"></div>
<div class="r" style="left:434px;top:354px;width:14px;height:8px;background:#ebebeb;border:1px solid #e2e2e2;box-sizing:border-box;"></div>
<svg class="r" style="left:438px;top:348px" width="7" height="12"><path d="M0.5 3.2L3.5 0.2L6.5 3.2Z M0.5 8.8L3.5 11.8L6.5 8.8Z" fill="#555"/></svg>
<div class="t " style="left:378.3px;top:347.14px;font-size:12px;line-height:12px;letter-spacing:0.4px;color:#8a8a8a;">6.00</div>
<div class="t " style="left:133.0px;top:349.14px;font-size:12px;line-height:12px;letter-spacing:0.4px;color:#000;">Columns :</div>
<div class="t " style="left:298.0px;top:349.14px;font-size:12px;line-height:12px;letter-spacing:0.4px;color:#000;">Rows :</div>
<div class="r" style="left:213px;top:376px;width:74px;height:20px;background:#f0f0f0;border:1px solid #aaadb5;box-sizing:border-box;"></div>
<div class="r" style="left:271px;top:378px;width:14px;height:8px;background:#ebebeb;border:1px solid #e2e2e2;box-sizing:border-box;"></div>
<div class="r" style="left:271px;top:386px;width:14px;height:8px;background:#ebebeb;border:1px solid #e2e2e2;box-sizing:border-box;"></div>
<svg class="r" style="left:275px;top:380px" width="7" height="12"><path d="M0.5 3.2L3.5 0.2L6.5 3.2Z M0.5 8.8L3.5 11.8L6.5 8.8Z" fill="#555"/></svg>
<div class="t " style="left:215.3px;top:379.14px;font-size:12px;line-height:12px;letter-spacing:0.4px;color:#8a8a8a;">0.98</div>
<div class="r" style="left:376px;top:376px;width:74px;height:20px;background:#f0f0f0;border:1px solid #aaadb5;box-sizing:border-box;"></div>
<div class="r" style="left:434px;top:378px;width:14px;height:8px;background:#ebebeb;border:1px solid #e2e2e2;box-sizing:border-box;"></div>
<div class="r" style="left:434px;top:386px;width:14px;height:8px;background:#ebebeb;border:1px solid #e2e2e2;box-sizing:border-box;"></div>
<svg class="r" style="left:438px;top:380px" width="7" height="12"><path d="M0.5 3.2L3.5 0.2L6.5 3.2Z M0.5 8.8L3.5 11.8L6.5 8.8Z" fill="#555"/></svg>
<div class="t " style="left:378.3px;top:379.14px;font-size:12px;line-height:12px;letter-spacing:0.4px;color:#8a8a8a;">1.12</div>
<div class="t " style="left:133.0px;top:380.84px;font-size:12px;line-height:12px;letter-spacing:0.4px;color:#000;">Left Margins :</div>
<div class="t " style="left:298.0px;top:380.84px;font-size:12px;line-height:12px;letter-spacing:0.4px;color:#000;">Top Margin :</div>
<div class="r" style="left:213px;top:409px;width:74px;height:20px;background:#f0f0f0;border:1px solid #aaadb5;box-sizing:border-box;"></div>
<div class="r" style="left:271px;top:411px;width:14px;height:8px;background:#ebebeb;border:1px solid #e2e2e2;box-sizing:border-box;"></div>
<div class="r" style="left:271px;top:419px;width:14px;height:8px;background:#ebebeb;border:1px solid #e2e2e2;box-sizing:border-box;"></div>
<svg class="r" style="left:275px;top:413px" width="7" height="12"><path d="M0.5 3.2L3.5 0.2L6.5 3.2Z M0.5 8.8L3.5 11.8L6.5 8.8Z" fill="#555"/></svg>
<div class="t " style="left:215.3px;top:412.14px;font-size:12px;line-height:12px;letter-spacing:0.4px;color:#8a8a8a;">0.39</div>
<div class="r" style="left:375px;top:409px;width:74px;height:20px;background:#f0f0f0;border:1px solid #aaadb5;box-sizing:border-box;"></div>
<div class="r" style="left:433px;top:411px;width:14px;height:8px;background:#ebebeb;border:1px solid #e2e2e2;box-sizing:border-box;"></div>
<div class="r" style="left:433px;top:419px;width:14px;height:8px;background:#ebebeb;border:1px solid #e2e2e2;box-sizing:border-box;"></div>
<svg class="r" style="left:437px;top:413px" width="7" height="12"><path d="M0.5 3.2L3.5 0.2L6.5 3.2Z M0.5 8.8L3.5 11.8L6.5 8.8Z" fill="#555"/></svg>
<div class="t " style="left:377.3px;top:412.14px;font-size:12px;line-height:12px;letter-spacing:0.4px;color:#8a8a8a;">0.00</div>
<div class="t " style="left:133.0px;top:406.84px;font-size:12px;line-height:12px;letter-spacing:0.4px;color:#000;">Horizontal</div>
<div class="t " style="left:137.0px;top:419.54px;font-size:12px;line-height:12px;letter-spacing:0.4px;color:#000;">Margins :</div>
<div class="t " style="left:300.40000000000003px;top:406.84px;font-size:12px;line-height:12px;letter-spacing:0.4px;color:#000;">Vertical</div>
<div class="t " style="left:298.0px;top:419.54px;font-size:12px;line-height:12px;letter-spacing:0.4px;color:#000;">Margins :</div>
<div class="r" style="left:212px;top:444px;width:74px;height:20px;background:#f0f0f0;border:1px solid #aaadb5;box-sizing:border-box;"></div>
<div class="r" style="left:270px;top:446px;width:14px;height:8px;background:#ebebeb;border:1px solid #e2e2e2;box-sizing:border-box;"></div>
<div class="r" style="left:270px;top:454px;width:14px;height:8px;background:#ebebeb;border:1px solid #e2e2e2;box-sizing:border-box;"></div>
<svg class="r" style="left:274px;top:448px" width="7" height="12"><path d="M0.5 3.2L3.5 0.2L6.5 3.2Z M0.5 8.8L3.5 11.8L6.5 8.8Z" fill="#555"/></svg>
<div class="t " style="left:214.3px;top:447.14px;font-size:12px;line-height:12px;letter-spacing:0.4px;color:#8a8a8a;">2.95</div>
<div class="r" style="left:376px;top:444px;width:74px;height:20px;background:#f0f0f0;border:1px solid #aaadb5;box-sizing:border-box;"></div>
<div class="r" style="left:434px;top:446px;width:14px;height:8px;background:#ebebeb;border:1px solid #e2e2e2;box-sizing:border-box;"></div>
<div class="r" style="left:434px;top:454px;width:14px;height:8px;background:#ebebeb;border:1px solid #e2e2e2;box-sizing:border-box;"></div>
<svg class="r" style="left:438px;top:448px" width="7" height="12"><path d="M0.5 3.2L3.5 0.2L6.5 3.2Z M0.5 8.8L3.5 11.8L6.5 8.8Z" fill="#555"/></svg>
<div class="t " style="left:378.3px;top:447.14px;font-size:12px;line-height:12px;letter-spacing:0.4px;color:#8a8a8a;">1.57</div>
<div class="t " style="left:133.0px;top:448.84px;font-size:12px;line-height:12px;letter-spacing:0.4px;color:#000;">Label Width :</div>
<div class="t " style="left:298.0px;top:448.84px;font-size:12px;line-height:12px;letter-spacing:0.4px;color:#000;">Label Height :</div>
<div class="r" style="left:213px;top:474px;width:74px;height:20px;background:#f0f0f0;border:1px solid #a9a9a9;box-sizing:border-box;"></div>
<div class="t " style="left:215.8px;top:477.64px;font-size:12px;line-height:12px;letter-spacing:0.4px;color:#111;">A4</div>
<div class="r" style="left:376px;top:474px;width:74px;height:20px;background:#f0f0f0;border:1px solid #a9a9a9;box-sizing:border-box;"></div>
<div class="t " style="left:378.8px;top:477.64px;font-size:12px;line-height:12px;letter-spacing:0.4px;color:#111;">Portrait</div>
<div class="t " style="left:131.0px;top:478.14px;font-size:12px;line-height:12px;letter-spacing:0.4px;color:#000;">Paper Used :</div>
<div class="t " style="left:298.0px;top:478.14px;font-size:12px;line-height:12px;letter-spacing:0.4px;color:#000;">Orientation :</div>
<div class="r" style="left:213px;top:503px;width:74px;height:20px;background:#f0f0f0;border:1px solid #aaadb5;box-sizing:border-box;"></div>
<div class="r" style="left:271px;top:505px;width:14px;height:8px;background:#ebebeb;border:1px solid #e2e2e2;box-sizing:border-box;"></div>
<div class="r" style="left:271px;top:513px;width:14px;height:8px;background:#ebebeb;border:1px solid #e2e2e2;box-sizing:border-box;"></div>
<svg class="r" style="left:275px;top:507px" width="7" height="12"><path d="M0.5 3.2L3.5 0.2L6.5 3.2Z M0.5 8.8L3.5 11.8L6.5 8.8Z" fill="#555"/></svg>
<div class="t " style="left:215.3px;top:506.14px;font-size:12px;line-height:12px;letter-spacing:0.4px;color:#8a8a8a;">8.27</div>
<div class="r" style="left:376px;top:503px;width:74px;height:20px;background:#f0f0f0;border:1px solid #aaadb5;box-sizing:border-box;"></div>
<div class="r" style="left:434px;top:505px;width:14px;height:8px;background:#ebebeb;border:1px solid #e2e2e2;box-sizing:border-box;"></div>
<div class="r" style="left:434px;top:513px;width:14px;height:8px;background:#ebebeb;border:1px solid #e2e2e2;box-sizing:border-box;"></div>
<svg class="r" style="left:438px;top:507px" width="7" height="12"><path d="M0.5 3.2L3.5 0.2L6.5 3.2Z M0.5 8.8L3.5 11.8L6.5 8.8Z" fill="#555"/></svg>
<div class="t " style="left:378.3px;top:506.14px;font-size:12px;line-height:12px;letter-spacing:0.4px;color:#8a8a8a;">11.69</div>
<div class="t " style="left:133.0px;top:507.84px;font-size:12px;line-height:12px;letter-spacing:0.4px;color:#000;">Page Width :</div>
<div class="t " style="left:298.0px;top:507.84px;font-size:12px;line-height:12px;letter-spacing:0.4px;color:#000;">Page Height :</div>
<div class="t " style="left:123.0px;top:567.94px;font-size:12px;line-height:12px;letter-spacing:0.4px;color:#000;">Printer Name :</div>
<div class="r" style="left:220px;top:564px;width:219px;height:20px;background:linear-gradient(#f0f0f0,#e4e4e4);border:1px solid #a5a5a5;box-sizing:border-box;"></div>
<svg class="r" style="left:426.5px;top:572px" width="9" height="7"><path d="M0.8 1L4 4.6L7.2 1" fill="none" stroke="#4a4a4a" stroke-width="1.9"/></svg>
<div class="t " style="left:223.60000000000002px;top:568.64px;font-size:12px;line-height:12px;letter-spacing:-0.65px;color:#111;">Microsoft XPS Document Writer</div>
<div class="t " style="left:123.0px;top:598.14px;font-size:12px;line-height:12px;letter-spacing:0.4px;color:#000;">Paper used :</div>
<div class="r" style="left:220px;top:589px;width:220px;height:21px;background:#f0f0f0;border:1px solid #6d6d6d;box-sizing:border-box;"></div>
<div class="t " style="left:221.60000000000002px;top:592.14px;font-size:12px;line-height:12px;letter-spacing:0.4px;color:#000;">Letter</div>
<div class="t " style="left:123.0px;top:618.94px;font-size:12px;line-height:12px;letter-spacing:0.4px;color:#000;">Paper Size</div>
<div class="t " style="left:128.9px;top:631.04px;font-size:12px;line-height:12px;letter-spacing:0.4px;color:#000;">(Inches) :</div>
<div class="r" style="left:220px;top:621px;width:94px;height:21px;background:#f0f0f0;border:1px solid #6d6d6d;box-sizing:border-box;"></div>
<div class="t " style="left:221.60000000000002px;top:623.54px;font-size:12px;line-height:12px;letter-spacing:0.4px;color:#000;">8.5 X 11</div>
<div class="r" style="left:321px;top:622px;width:117px;height:21px;background:linear-gradient(#eaf4fd,#d9ebfb);border:1px solid #7eb4ea;box-sizing:border-box;"></div>
<div class="t " style="left:340.8px;top:626.64px;font-size:12px;line-height:12px;letter-spacing:0.4px;color:#000;">Change Page</div>
<div class="t " style="left:116.0px;top:660.14px;font-size:12px;line-height:12px;letter-spacing:0.4px;color:#000;">Copies number :</div>
<div class="r" style="left:220px;top:657px;width:62px;height:20px;background:#fff;border:1px solid #aaadb5;box-sizing:border-box;"></div>
<div class="r" style="left:266px;top:659px;width:14px;height:16px;background:#c9c9c9;"></div>
<div class="r" style="left:267px;top:659px;width:12px;height:7px;background:#ececec;"></div>
<div class="r" style="left:267px;top:668px;width:12px;height:6.5px;background:#ececec;"></div>
<svg class="r" style="left:269px;top:660px" width="9" height="14"><path d="M1 4.6L4.5 1.2L8 4.6Z M1 9.4L4.5 12.6L8 9.4Z" fill="#111"/></svg>
<div class="t " style="left:222.60000000000002px;top:660.14px;font-size:12px;line-height:12px;letter-spacing:0.4px;color:#111;">1</div>
<div class="r" style="left:526px;top:206px;width:277px;height:391px;border:1px solid #6a6a6a;box-sizing:border-box;background:#fff;"></div>
<svg width="0" height="0" style="position:absolute"><defs><g id="bc"><rect x="0" y="0" width="5" height="14" fill="#000"/><rect x="6" y="0" width="3" height="14" fill="#888"/><rect x="11" y="0" width="1" height="14" fill="#000"/><rect x="13" y="0" width="1" height="7" fill="#000"/><rect x="14" y="7" width="1" height="7" fill="#000"/><rect x="15" y="7" width="1" height="4" fill="#000"/><rect x="16" y="4" width="1" height="3" fill="#000"/><rect x="16" y="7" width="1" height="7" fill="#000"/><rect x="18" y="0" width="1" height="3" fill="#000"/><rect x="18" y="7" width="1" height="3" fill="#000"/><rect x="19" y="7" width="1" height="7" fill="#000"/><rect x="20" y="7" width="1" height="7" fill="#000"/><rect x="22" y="0" width="1" height="4" fill="#000"/><rect x="22" y="7" width="1" height="7" fill="#000"/><rect x="23" y="0" width="1" height="4" fill="#000"/><rect x="23" y="7" width="1" height="7" fill="#000"/><rect x="24" y="7" width="1" height="7" fill="#000"/><rect x="26" y="0" width="1" height="3" fill="#000"/><rect x="26" y="7" width="1" height="7" fill="#000"/><rect x="27" y="0" width="1" height="7" fill="#000"/><rect x="27" y="7" width="1" height="7" fill="#000"/><rect x="29" y="0" width="1" height="7" fill="#000"/><rect x="29" y="7" width="1" height="7" fill="#000"/><rect x="31" y="4" width="1" height="3" fill="#000"/><rect x="31" y="7" width="1" height="3" fill="#000"/><rect x="32" y="0" width="1" height="7" fill="#000"/><rect x="32" y="7" width="1" height="4" fill="#000"/><rect x="33" y="0" width="1" height="7" fill="#000"/><rect x="33" y="7" width="1" height="7" fill="#000"/><rect x="34" y="7" width="1" height="7" fill="#000"/><rect x="37" y="3" width="1" height="4" fill="#000"/><rect x="37" y="7" width="1" height="7" fill="#000"/><rect x="38" y="0" width="1" height="7" fill="#000"/><rect x="39" y="3" width="1" height="4" fill="#000"/><rect x="40" y="10" width="1" height="4" fill="#000"/><rect x="41" y="0" width="1" height="7" fill="#000"/><rect x="41" y="7" width="1" height="7" fill="#000"/><rect x="42" y="0" width="1" height="7" fill="#000"/><rect x="42" y="10" width="1" height="4" fill="#000"/><rect x="43" y="0" width="1" height="7" fill="#000"/><rect x="43" y="7" width="1" height="7" fill="#000"/><rect x="44" y="11" width="1" height="3" fill="#000"/><rect x="45" y="0" width="1" height="7" fill="#000"/><rect x="45" y="7" width="1" height="7" fill="#000"/><rect x="46" y="3" width="1" height="4" fill="#000"/><rect x="46" y="7" width="1" height="7" fill="#000"/><rect x="47" y="7" width="1" height="7" fill="#000"/><rect x="48" y="3" width="1" height="4" fill="#000"/><rect x="48" y="7" width="1" height="4" fill="#000"/><rect x="49" y="7" width="1" height="7" fill="#000"/><rect x="50" y="0" width="1" height="7" fill="#000"/><rect x="50" y="7" width="1" height="7" fill="#000"/><rect x="51" y="0" width="1" height="7" fill="#000"/><rect x="51" y="7" width="1" height="7" fill="#000"/><rect x="52" y="0" width="1" height="7" fill="#000"/><rect x="53" y="7" width="1" height="7" fill="#000"/><rect x="54" y="0" width="1" height="7" fill="#000"/><rect x="54" y="7" width="1" height="7" fill="#000"/><rect x="55" y="0" width="1" height="7" fill="#000"/><rect x="55" y="7" width="1" height="7" fill="#000"/><rect x="56" y="0" width="1" height="7" fill="#000"/><rect x="57" y="10" width="1" height="4" fill="#000"/><rect x="59" y="0" width="1" height="7" fill="#000"/><rect x="59" y="7" width="1" height="7" fill="#000"/><rect x="60" y="0" width="1" height="7" fill="#000"/><rect x="60" y="11" width="1" height="3" fill="#000"/><rect x="62" y="10" width="1" height="4" fill="#000"/><rect x="63" y="3" width="1" height="4" fill="#000"/><rect x="66" y="7" width="1" height="4" fill="#000"/><rect x="68" y="0" width="6" height="14" fill="#000"/><rect x="75" y="0" width="2" height="14" fill="#777"/><rect x="78" y="0" width="2" height="14" fill="#222"/></g></defs></svg>
<div class="r" style="left:559px;top:244px;width:100px;height:53px;border-top:1px solid #adadad;border-bottom:1px solid #adadad;border-left:2px solid #c8c8c8;border-right:2px solid #c8c8c8;box-sizing:border-box;background:#fff;"></div>
<svg class="r" style="left:569px;top:264px" width="80" height="14"><use href="#bc"/></svg>
<div class="t" style="left:578.5px;width:60px;text-align:center;top:255.55px;font-size:6.2px;line-height:6.2px;letter-spacing:0px;color:#666;">Header</div>
<div class="t" style="left:578.5px;width:60px;text-align:center;top:280.25px;font-size:6.2px;line-height:6.2px;letter-spacing:0px;color:#6a6a6a;">Footer</div>
<div class="r" style="left:559px;top:296px;width:100px;height:54px;border-top:1px solid #adadad;border-bottom:1px solid #adadad;border-left:2px solid #c8c8c8;border-right:2px solid #c8c8c8;box-sizing:border-box;background:#fff;"></div>
<svg class="r" style="left:569px;top:316px" width="80" height="14"><use href="#bc"/></svg>
<div class="t" style="left:578.5px;width:60px;text-align:center;top:307.55px;font-size:6.2px;line-height:6.2px;letter-spacing:0px;color:#666;">Header</div>
<div class="t" style="left:578.5px;width:60px;text-align:center;top:332.25px;font-size:6.2px;line-height:6.2px;letter-spacing:0px;color:#6a6a6a;">Footer</div>
<div class="r" style="left:559px;top:349px;width:100px;height:53px;border-top:1px solid #adadad;border-bottom:1px solid #adadad;border-left:2px solid #c8c8c8;border-right:2px solid #c8c8c8;box-sizing:border-box;background:#fff;"></div>
<svg class="r" style="left:569px;top:369px" width="80" height="14"><use href="#bc"/></svg>
<div class="t" style="left:578.5px;width:60px;text-align:center;top:360.55px;font-size:6.2px;line-height:6.2px;letter-spacing:0px;color:#666;">Header</div>
<div class="t" style="left:578.5px;width:60px;text-align:center;top:385.25px;font-size:6.2px;line-height:6.2px;letter-spacing:0px;color:#6a6a6a;">Footer</div>
<div class="r" style="left:559px;top:401px;width:100px;height:53px;border-top:1px solid #adadad;border-bottom:1px solid #adadad;border-left:2px solid #c8c8c8;border-right:2px solid #c8c8c8;box-sizing:border-box;background:#fff;"></div>
<svg class="r" style="left:569px;top:421px" width="80" height="14"><use href="#bc"/></svg>
<div class="t" style="left:578.5px;width:60px;text-align:center;top:412.55px;font-size:6.2px;line-height:6.2px;letter-spacing:0px;color:#666;">Header</div>
<div class="t" style="left:578.5px;width:60px;text-align:center;top:437.25px;font-size:6.2px;line-height:6.2px;letter-spacing:0px;color:#6a6a6a;">Footer</div>
<div class="r" style="left:559px;top:453px;width:100px;height:54px;border-top:1px solid #adadad;border-bottom:1px solid #adadad;border-left:2px solid #c8c8c8;border-right:2px solid #c8c8c8;box-sizing:border-box;background:#fff;"></div>
<svg class="r" style="left:569px;top:473px" width="80" height="14"><use href="#bc"/></svg>
<div class="t" style="left:578.5px;width:60px;text-align:center;top:464.55px;font-size:6.2px;line-height:6.2px;letter-spacing:0px;color:#666;">Header</div>
<div class="t" style="left:578.5px;width:60px;text-align:center;top:489.25px;font-size:6.2px;line-height:6.2px;letter-spacing:0px;color:#6a6a6a;">Footer</div>
<div class="r" style="left:559px;top:506px;width:100px;height:53px;border-top:1px solid #adadad;border-bottom:1px solid #adadad;border-left:2px solid #c8c8c8;border-right:2px solid #c8c8c8;box-sizing:border-box;background:#fff;"></div>
<svg class="r" style="left:569px;top:526px" width="80" height="14"><use href="#bc"/></svg>
<div class="t" style="left:578.5px;width:60px;text-align:center;top:517.55px;font-size:6.2px;line-height:6.2px;letter-spacing:0px;color:#666;">Header</div>
<div class="t" style="left:578.5px;width:60px;text-align:center;top:542.25px;font-size:6.2px;line-height:6.2px;letter-spacing:0px;color:#6a6a6a;">Footer</div>
<div class="r" style="left:670px;top:244px;width:100px;height:53px;border-top:1px solid #adadad;border-bottom:1px solid #adadad;border-left:2px solid #c8c8c8;border-right:2px solid #c8c8c8;box-sizing:border-box;background:#fff;"></div>
<svg class="r" style="left:680px;top:264px" width="80" height="14"><use href="#bc"/></svg>
<div class="t" style="left:689.5px;width:60px;text-align:center;top:255.55px;font-size:6.2px;line-height:6.2px;letter-spacing:0px;color:#666;">Header</div>
<div class="t" style="left:689.5px;width:60px;text-align:center;top:280.25px;font-size:6.2px;line-height:6.2px;letter-spacing:0px;color:#6a6a6a;">Footer</div>
<div class="r" style="left:670px;top:296px;width:100px;height:54px;border-top:1px solid #adadad;border-bottom:1px solid #adadad;border-left:2px solid #c8c8c8;border-right:2px solid #c8c8c8;box-sizing:border-box;background:#fff;"></div>
<svg class="r" style="left:680px;top:316px" width="80" height="14"><use href="#bc"/></svg>
<div class="t" style="left:689.5px;width:60px;text-align:center;top:307.55px;font-size:6.2px;line-height:6.2px;letter-spacing:0px;color:#666;">Header</div>
<div class="t" style="left:689.5px;width:60px;text-align:center;top:332.25px;font-size:6.2px;line-height:6.2px;letter-spacing:0px;color:#6a6a6a;">Footer</div>
<div class="r" style="left:670px;top:349px;width:100px;height:53px;border-top:1px solid #adadad;border-bottom:1px solid #adadad;border-left:2px solid #c8c8c8;border-right:2px solid #c8c8c8;box-sizing:border-box;background:#fff;"></div>
<svg class="r" style="left:680px;top:369px" width="80" height="14"><use href="#bc"/></svg>
<div class="t" style="left:689.5px;width:60px;text-align:center;top:360.55px;font-size:6.2px;line-height:6.2px;letter-spacing:0px;color:#666;">Header</div>
<div class="t" style="left:689.5px;width:60px;text-align:center;top:385.25px;font-size:6.2px;line-height:6.2px;letter-spacing:0px;color:#6a6a6a;">Footer</div>
<div class="r" style="left:670px;top:401px;width:100px;height:53px;border-top:1px solid #adadad;border-bottom:1px solid #adadad;border-left:2px solid #c8c8c8;border-right:2px solid #c8c8c8;box-sizing:border-box;background:#fff;"></div>
<svg class="r" style="left:680px;top:421px" width="80" height="14"><use href="#bc"/></svg>
<div class="t" style="left:689.5px;width:60px;text-align:center;top:412.55px;font-size:6.2px;line-height:6.2px;letter-spacing:0px;color:#666;">Header</div>
<div class="t" style="left:689.5px;width:60px;text-align:center;top:437.25px;font-size:6.2px;line-height:6.2px;letter-spacing:0px;color:#6a6a6a;">Footer</div>
<div class="r" style="left:670px;top:453px;width:100px;height:54px;border-top:1px solid #adadad;border-bottom:1px solid #adadad;border-left:2px solid #c8c8c8;border-right:2px solid #c8c8c8;box-sizing:border-box;background:#fff;"></div>
<svg class="r" style="left:680px;top:473px" width="80" height="14"><use href="#bc"/></svg>
<div class="t" style="left:689.5px;width:60px;text-align:center;top:464.55px;font-size:6.2px;line-height:6.2px;letter-spacing:0px;color:#666;">Header</div>
<div class="t" style="left:689.5px;width:60px;text-align:center;top:489.25px;font-size:6.2px;line-height:6.2px;letter-spacing:0px;color:#6a6a6a;">Footer</div>
<div class="r" style="left:670px;top:506px;width:100px;height:53px;border-top:1px solid #adadad;border-bottom:1px solid #adadad;border-left:2px solid #c8c8c8;border-right:2px solid #c8c8c8;box-sizing:border-box;background:#fff;"></div>
<svg class="r" style="left:680px;top:526px" width="80" height="14"><use href="#bc"/></svg>
<div class="t" style="left:689.5px;width:60px;text-align:center;top:517.55px;font-size:6.2px;line-height:6.2px;letter-spacing:0px;color:#666;">Header</div>
<div class="t" style="left:689.5px;width:60px;text-align:center;top:542.25px;font-size:6.2px;line-height:6.2px;letter-spacing:0px;color:#6a6a6a;">Footer</div>
<div class="r" style="left:482px;top:624px;width:13px;height:13px;border:1px solid #333;box-sizing:border-box;background:#fff;"></div>
<svg class="r" style="left:484px;top:626px" width="10" height="10"><path d="M1 5L3.8 8L8.5 1.5" fill="none" stroke="#111" stroke-width="1.8"/></svg>
<div class="t " style="left:500.6px;top:624.44px;font-size:12px;line-height:12px;letter-spacing:0.32px;color:#000;">Show Label Margins</div>
<div class="t " style="left:482.2px;top:643.94px;font-size:12px;line-height:12px;letter-spacing:0.4px;color:#000;">Barcode Type :</div>
<div class="t " style="left:586.1999999999999px;top:643.94px;font-size:12px;line-height:12px;letter-spacing:0.4px;color:#1e1ee6;">2D Barcode</div>
<div class="t " style="left:482.90000000000003px;top:665.14px;font-size:12px;line-height:12px;letter-spacing:0.4px;color:#000;">Barcode Font :</div>
<div class="t " style="left:586.1999999999999px;top:665.14px;font-size:12px;line-height:12px;letter-spacing:0px;color:#1e1ee6;">PDF417 Font</div>
<div class="r" style="left:483px;top:687px;width:109px;height:26px;background:linear-gradient(#f2f2f2,#e3e3e3);border:1px solid #adadad;box-sizing:border-box;"></div>
<div class="t" style="left:482.6px;width:109px;text-align:center;top:694.64px;font-size:12px;line-height:12px;letter-spacing:0.3px;color:#000;">Print Preview</div>
<div class="r" style="left:628px;top:687px;width:109px;height:26px;background:linear-gradient(#f2f2f2,#e3e3e3);border:1px solid #adadad;box-sizing:border-box;"></div>
<div class="t" style="left:627.6px;width:109px;text-align:center;top:694.64px;font-size:12px;line-height:12px;letter-spacing:0.3px;color:#000;">Print</div>
<div class="r" style="left:755px;top:687px;width:109px;height:26px;background:linear-gradient(#f2f2f2,#e3e3e3);border:1px solid #adadad;box-sizing:border-box;"></div>
<div class="t" style="left:754.6px;width:109px;text-align:center;top:694.64px;font-size:12px;line-height:12px;letter-spacing:0.3px;color:#000;">Close</div>
<div class="r" style="left:876px;top:713px;width:2px;height:2px;background:#b9b9b9;"></div>
<div class="r" style="left:873px;top:716px;width:2px;height:2px;background:#b9b9b9;"></div>
<div class="r" style="left:876px;top:716px;width:2px;height:2px;background:#b9b9b9;"></div>
<div class="r" style="left:870px;top:719px;width:2px;height:2px;background:#b9b9b9;"></div>
<div class="r" style="left:873px;top:719px;width:2px;height:2px;background:#b9b9b9;"></div>
<div class="r" style="left:876px;top:719px;width:2px;height:2px;background:#b9b9b9;"></div>
<div class="r" style="left:519px;top:726px;width:364px;height:20px;background:linear-gradient(#ff6a24,#ff4a00);border-radius:0 0 6px 0;"></div>
<div class="t" style="left:521.0px;width:360px;text-align:center;top:727.19px;font-size:17.5px;line-height:17.5px;letter-spacing:1.3px;color:#fff;font-weight:bold;">www.Datadoctor.in</div>
<div id="frame"></div>
</body></html>
